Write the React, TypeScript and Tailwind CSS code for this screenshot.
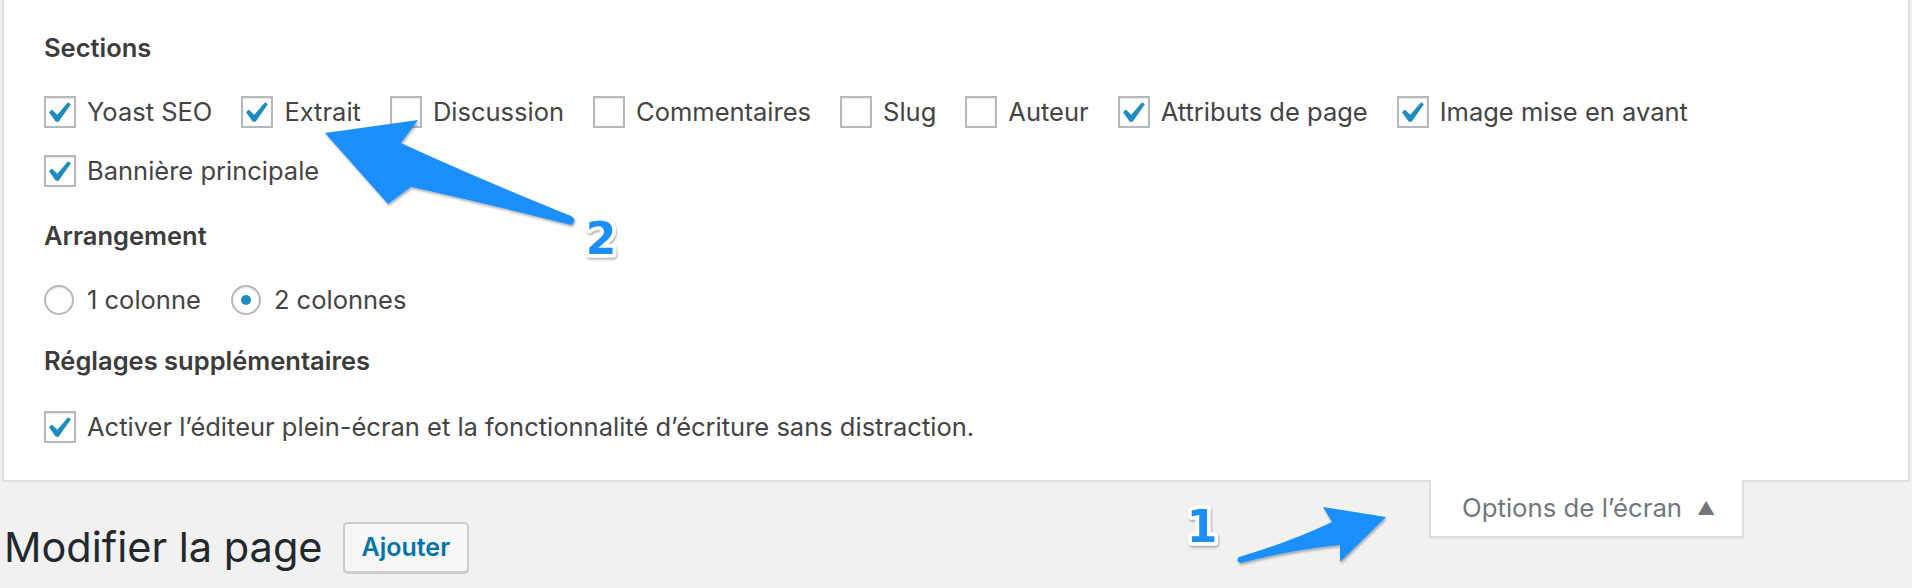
import React from 'react'

const SECTIONS: { label: string; checked: boolean }[] = [
  { label: 'Yoast SEO', checked: true },
  { label: 'Extrait', checked: true },
  { label: 'Discussion', checked: false },
  { label: 'Commentaires', checked: false },
  { label: 'Slug', checked: false },
  { label: 'Auteur', checked: false },
  { label: 'Attributs de page', checked: true },
  { label: 'Image mise en avant', checked: true },
  { label: 'Bannière principale', checked: true },
]

function Check() {
  return (
    <svg width="24" height="22" viewBox="5.3 4.4 11.4 10.3" className="block">
      <path d="M14.83 4.89l1.34.94-5.81 8.38H9.02L5.78 9.67l1.34-1.25 2.57 2.4z" fill="#1e8cbe" />
    </svg>
  )
}

function Checkbox({ label, checked }: { label: string; checked: boolean }) {
  return (
    <label className="flex items-center gap-[11px] mr-[29px]">
      <span className="w-[32px] h-[32px] shrink-0 border-2 border-[#b4b9be] bg-white shadow-[inset_0_1px_2px_rgba(0,0,0,0.1)] flex items-center justify-center">
        {checked && <Check />}
      </span>
      <span>{label}</span>
    </label>
  )
}

function Radio({ label, checked }: { label: string; checked: boolean }) {
  return (
    <label className="flex items-center gap-[13px] mr-[30px]">
      <span className="w-[30px] h-[30px] rounded-full border-2 border-[#b4b9be] bg-white shadow-[inset_0_1px_2px_rgba(0,0,0,0.1)] flex items-center justify-center">
        {checked && <span className="w-[10px] h-[10px] rounded-full bg-[#1e8cbe]" />}
      </span>
      <span>{label}</span>
    </label>
  )
}

function Annotations() {
  return (
    <svg className="absolute inset-0 pointer-events-none" width="1912" height="588" viewBox="0 0 1912 588">
      <defs>
        <filter id="sh" x="-10%" y="-10%" width="130%" height="140%">
          <feDropShadow dx="1" dy="2" stdDeviation="1.2" floodColor="#000" floodOpacity="0.3" />
        </filter>
      </defs>
      {/* arrow 2 */}
      <path
        filter="url(#sh)"
        fill="#1b8fff"
        d="M325 133 L418 120 L401 143 Q470 175 571 216 Q578 220 571 225 Q480 202 411 187 L388 204 Z"
      />
      {/* arrow 1 */}
      <path
        filter="url(#sh)"
        fill="#1b8fff"
        d="M1386 517 L1323 507 L1332 522 Q1290 542 1239 557 Q1235 561 1241 563 Q1290 550 1340 545 L1340 562 Z"
      />
      <g filter="url(#sh)" fontFamily="'DejaVu Sans', sans-serif" fontWeight="bold" fontSize="44">
        <text x="601" y="254" textAnchor="middle" fill="#1b8fff" stroke="#fff" strokeWidth="7" strokeLinejoin="round" paintOrder="stroke">2</text>
        <text x="1202" y="542" textAnchor="middle" fill="#1b8fff" stroke="#fff" strokeWidth="7" strokeLinejoin="round" paintOrder="stroke">1</text>
      </g>
    </svg>
  )
}

export default function App() {
  return (
    <div className="relative w-[1912px] h-[588px] overflow-hidden bg-[#f1f1f1] font-['Inter','Liberation_Sans',sans-serif] text-[#444]">
      {/* screen options panel */}
      <div className="mx-[2px] bg-white border-x-2 border-b-2 border-[#dedede] pl-[40px] pt-[34px] pb-[37px] text-[25.5px] leading-[28px]">
        <div className="font-semibold text-[#3c3c3c]">Sections</div>
        <div className="mt-[34px] flex flex-wrap gap-y-[27px] pr-[160px]">
          {SECTIONS.map(s => (
            <Checkbox key={s.label} label={s.label} checked={s.checked} />
          ))}
        </div>

        <div className="mt-[35px] font-semibold text-[#3c3c3c]">Arrangement</div>
        <div className="mt-[35px] flex">
          <Radio label="1 colonne" checked={false} />
          <Radio label="2 colonnes" checked />
        </div>

        <div className="mt-[32px] font-semibold text-[#3c3c3c]">Réglages supplémentaires</div>
        <div className="mt-[36px] flex">
          <Checkbox label="Activer l’éditeur plein-écran et la fonctionnalité d’écriture sans distraction." checked />
        </div>
      </div>

      {/* title row + screen options tab */}
      <div className="flex items-start justify-between pr-[168px]">
        <div className="flex items-center gap-[20px] pl-[4px] pt-[40px]">
          <h1 className="text-[41.5px] leading-[51px] font-normal text-[#23282d]">Modifier la page</h1>
          <button className="h-[51px] px-[17px] rounded-[5px] border-2 border-[#cccccc] bg-[#f7f7f7] shadow-[0_1px_0_#ccc] text-[25px] font-semibold text-[#0073aa]">
            Ajouter
          </button>
        </div>
        <div className="-mt-[2px] w-[315px] h-[58px] bg-white border-x-2 border-b-2 border-[#dedede] shadow-[0_1px_1px_rgba(0,0,0,0.04)] flex items-center pl-[31px] gap-[15px] text-[25.75px] text-[#72777c]">
          <span>Options de l’écran</span>
          <span className="text-[18px]">▲</span>
        </div>
      </div>

      <Annotations />
    </div>
  )
}
